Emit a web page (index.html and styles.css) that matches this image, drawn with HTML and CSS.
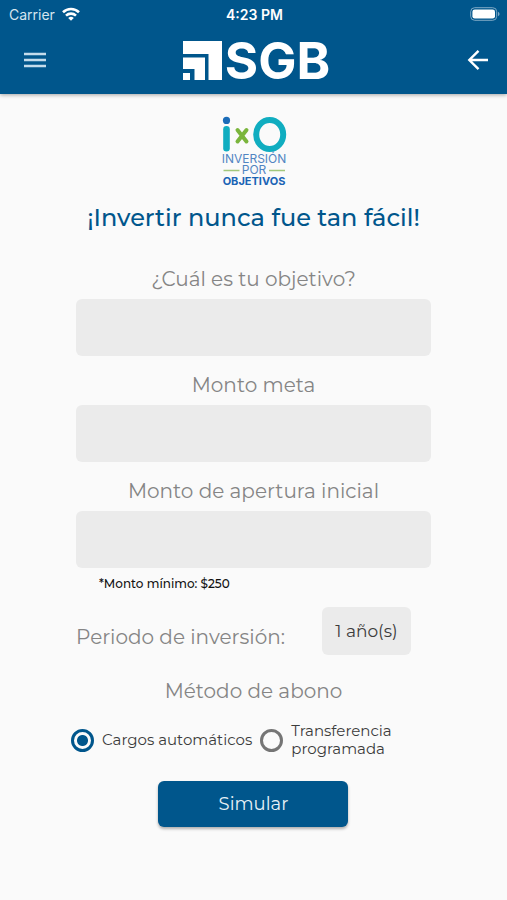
FILE: index.html
```html
<!DOCTYPE html>
<html lang="es">
<head>
<meta charset="utf-8">
<meta name="viewport" content="width=device-width, initial-scale=1">
<title>SGB – Inversión por Objetivos</title>
<link rel="stylesheet" href="styles.css">
</head>
<body>
<header class="header">
  <div class="status">
    <span class="carrier">Carrier
      <svg width="18" height="14" viewBox="0 0 18 14" fill="none" stroke="#fff" stroke-width="2.6" aria-hidden="true"><path d="M1 5.200a11.600 11.600 0 0 1 16 0M4 8.600a7.300 7.300 0 0 1 10 0"/><path d="M9 13.800 6.200 11a4 4 0 0 1 5.600 0z" fill="#fff" stroke="none"/></svg>
    </span>
    <span class="clock">4:23 PM</span>
    <svg class="battery" width="30" height="14" viewBox="0 0 30 14" aria-hidden="true"><rect x=".7" y=".7" width="26" height="12.6" rx="4" fill="none" stroke="#7fa9c5" stroke-width="1"/><rect x="2.4" y="2.4" width="22.6" height="9.2" rx="2.4" fill="#fff"/><path d="M28 4.8q1.6.7 1.6 2.2T28 9.2z" fill="#7fa9c5"/></svg>
  </div>
  <div class="toolbar">
    <button class="icon-button" type="button" aria-label="Menú">
      <svg width="24" height="24" viewBox="0 0 24 24" stroke="#c3dcec" stroke-width="2.4"><path d="M1 6h22M1 12h22M1 18h22"/></svg>
    </button>
    <div class="brand">
      <svg width="39" height="39" viewBox="0 0 39 39" fill="#fff" aria-hidden="true"><path d="M0 0h39v39H25.500V13H0zM0 16.500h22V39H11.500V28H0zM0 32h7v7H0z"/></svg>
      <span>SGB</span>
    </div>
    <button class="icon-button" type="button" aria-label="Volver">
      <svg width="24" height="24" viewBox="0 0 24 24" fill="none" stroke="#fff" stroke-width="2.400"><path d="M22 12H3.500M12.500 2.800 3.300 12l9.200 9.200"/></svg>
    </button>
  </div>
</header>
<main class="content">
  <svg class="ixo" width="68" height="72" viewBox="0 0 68 72" role="img" aria-label="ixO Inversión por Objetivos">
    <circle cx="6.500" cy="5.400" r="3.600" fill="#1b6cb8"/>
    <path d="M6.500 14.200v19" stroke="#10adc0" stroke-width="6.600" stroke-linecap="round"/>
    <path d="m17.500 15 9 11.500m0-11.500-9 11.500" stroke="#7ab53c" stroke-width="4" stroke-linecap="round"/>
    <ellipse cx="49.700" cy="19.500" rx="13.500" ry="14.500" fill="none" stroke="#10adc0" stroke-width="6"/>
    <g class="ixo-words">
      <text x="34" y="48">INVERSIÓN</text>
      <text x="34" y="59">POR</text>
      <text class="ixo-strong" x="34" y="70">OBJETIVOS</text>
    </g>
    <path d="M3.500 55.500h16M49 55.500h16" stroke="#a3c77c" stroke-width="1.400"/>
  </svg>
  <h1 class="title">¡Invertir nunca fue tan fácil!</h1>
  <form class="form">
    <div class="field">
      <label for="objetivo">¿Cuál es tu objetivo?</label>
      <input id="objetivo" type="text">
    </div>
    <div class="field">
      <label for="meta">Monto meta</label>
      <input id="meta" type="text" inputmode="decimal">
    </div>
    <div class="field">
      <label for="apertura">Monto de apertura inicial</label>
      <input id="apertura" type="text" inputmode="decimal">
    </div>
    <p class="note">*Monto mínimo: $250</p>
    <div class="period">
      <label for="periodo">Periodo de inversión:</label>
      <select id="periodo"><option>1 año(s)</option></select>
    </div>
    <fieldset class="method">
      <legend>Método de abono</legend>
      <div class="options">
        <label class="option"><input type="radio" name="abono" checked>Cargos automáticos</label>
        <label class="option"><input type="radio" name="abono"><span>Transferencia<br>programada</span></label>
      </div>
    </fieldset>
    <button class="submit" type="button">Simular</button>
  </form>
</main>
</body>
</html>
```
FILE: styles.css
```css
* {
  box-sizing: border-box;
}

body {
  margin: 0;
  min-height: 100vh;
  background: #fafafa;
  color: #3c3c3c;
  font-family: Montserrat, Inter, sans-serif;
}

button,
input,
select {
  font: inherit;
}

.header {
  background: #00568c;
  color: #fff;
  box-shadow: 0 1px 4px rgba(0, 0, 0, 0.35);
}

.status {
  display: grid;
  grid-template-columns: 1fr auto 1fr;
  align-items: center;
  height: 28px;
  padding: 0 7px 0 9px;
  font-family: Inter, sans-serif;
  font-size: 14px;
}

.carrier {
  display: flex;
  align-items: center;
  gap: 7px;
  color: #d5e5ef;
}

.clock {
  font-weight: 600;
}

.battery {
  justify-self: end;
}

.toolbar {
  display: flex;
  align-items: center;
  justify-content: space-between;
  height: 66px;
  padding: 0 17px 2px 23px;
}

.icon-button {
  display: flex;
  padding: 0;
  border: 0;
  background: none;
}

.brand {
  display: flex;
  align-items: center;
  gap: 3px;
  font-family: Inter, sans-serif;
  font-size: 51px;
  font-weight: 700;
  line-height: 1;
}

.content {
  display: flex;
  flex-direction: column;
  align-items: center;
  padding: 21px 0 24px;
}

.ixo {
  display: block;
}

.ixo-words {
  fill: #5285c2;
  font-family: Inter, sans-serif;
  font-size: 12px;
  text-anchor: middle;
}

.ixo-strong {
  fill: #1b64b5;
  font-size: 11px;
  font-weight: 700;
}

.title {
  margin: 16px 0 34px;
  color: #00568c;
  font-size: 24px;
  font-weight: 500;
  line-height: 30px;
}

.form {
  display: flex;
  flex-direction: column;
  width: 70%;
}

.field {
  display: flex;
  flex-direction: column;
  gap: 8px;
  margin-bottom: 17px;
}

.field label,
.period label,
.method legend {
  color: #858585;
  font-size: 20px;
  line-height: 24px;
  text-align: center;
}

.field input {
  width: 100%;
  height: 57px;
  padding: 0 16px;
  border: 0;
  border-radius: 6px;
  background: #ebebeb;
}

.note {
  margin: -9px 0 15px 23px;
  color: #111;
  font-size: 12px;
  font-weight: 500;
  line-height: 16px;
}

.period {
  display: flex;
  align-items: flex-end;
  justify-content: space-between;
  padding-right: 20px;
}

.period label {
  padding-bottom: 6px;
}

.period select {
  appearance: none;
  width: 89px;
  height: 48px;
  border: 0;
  border-radius: 6px;
  background: #ebebeb;
  color: #3c3c3c;
  font-size: 17px;
  text-align: center;
  text-align-last: center;
}

.method {
  min-width: 0;
  margin: 24px 0 0;
  padding: 0;
  border: 0;
}

.method legend {
  width: 100%;
  padding: 0;
}

.options {
  display: flex;
  gap: 8px;
  margin: 19px 0 0 -5px;
}

.option {
  display: flex;
  align-items: center;
  gap: 8px;
  font-size: 15px;
  line-height: 18px;
  white-space: nowrap;
}

.option input {
  appearance: none;
  flex: none;
  width: 23px;
  height: 23px;
  margin: 0;
  border: 3px solid #757575;
  border-radius: 50%;
}

.option input:checked {
  border-color: #00568c;
  background: radial-gradient(circle, #00568c 5px, transparent 6px);
}

.submit {
  align-self: center;
  width: 190px;
  height: 46px;
  margin-top: 23px;
  border: 0;
  border-radius: 6px;
  background: #00568c;
  color: #e8f1f7;
  font-size: 18px;
  box-shadow: 0 2px 3px rgba(0, 0, 0, 0.3);
}
```
